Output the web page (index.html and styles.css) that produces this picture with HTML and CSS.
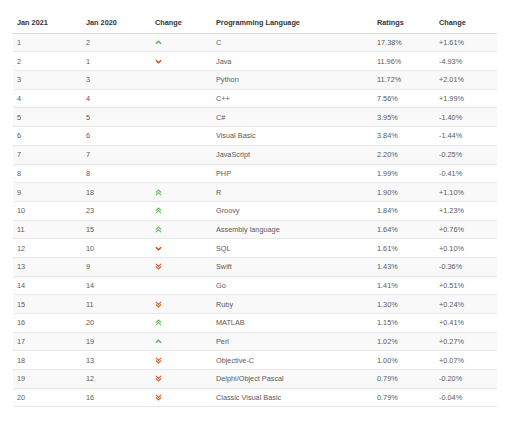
FILE: index.html
```html
<!DOCTYPE html>
<html>
<head>
<meta charset="utf-8">
<link rel="stylesheet" href="styles.css">
</head>
<body>
<svg width="0" height="0" class="defs">
  <defs>
    <symbol id="up" viewBox="0 0 8 8"><path d="M1 5.5 L4 2.5 L7 5.5" fill="none" stroke="#5cb85c" stroke-width="1.6"/></symbol>
    <symbol id="down" viewBox="0 0 8 8"><path d="M1 2.5 L4 5.5 L7 2.5" fill="none" stroke="#d9441c" stroke-width="1.6"/></symbol>
    <symbol id="up2" viewBox="0 0 8 8"><path d="M1 4 L4 1.2 L7 4 M1 7 L4 4.2 L7 7" fill="none" stroke="#6cc06c" stroke-width="1.4"/></symbol>
    <symbol id="down2" viewBox="0 0 8 8"><path d="M1 1 L4 3.8 L7 1 M1 4 L4 6.8 L7 4" fill="none" stroke="#e8622a" stroke-width="1.4"/></symbol>
  </defs>
</svg>
<table class="tiobe">
  <thead>
    <tr><th class="c1">Jan 2021</th><th class="c2">Jan 2020</th><th class="c3">Change</th><th class="c4">Programming Language</th><th class="c5">Ratings</th><th class="c6">Change</th></tr>
  </thead>
  <tbody>
    <tr><td>1</td><td>2</td><td><svg class="ic"><use href="#up"/></svg></td><td>C</td><td>17.38%</td><td>+1.61%</td></tr>
    <tr><td>2</td><td>1</td><td><svg class="ic"><use href="#down"/></svg></td><td>Java</td><td>11.96%</td><td>-4.93%</td></tr>
    <tr><td>3</td><td>3</td><td></td><td>Python</td><td>11.72%</td><td>+2.01%</td></tr>
    <tr><td>4</td><td>4</td><td></td><td>C++</td><td>7.56%</td><td>+1.99%</td></tr>
    <tr><td>5</td><td>5</td><td></td><td>C#</td><td>3.95%</td><td>-1.40%</td></tr>
    <tr><td>6</td><td>6</td><td></td><td>Visual Basic</td><td>3.84%</td><td>-1.44%</td></tr>
    <tr><td>7</td><td>7</td><td></td><td>JavaScript</td><td>2.20%</td><td>-0.25%</td></tr>
    <tr><td>8</td><td>8</td><td></td><td>PHP</td><td>1.99%</td><td>-0.41%</td></tr>
    <tr><td>9</td><td>18</td><td><svg class="ic"><use href="#up2"/></svg></td><td>R</td><td>1.90%</td><td>+1.10%</td></tr>
    <tr><td>10</td><td>23</td><td><svg class="ic"><use href="#up2"/></svg></td><td>Groovy</td><td>1.84%</td><td>+1.23%</td></tr>
    <tr><td>11</td><td>15</td><td><svg class="ic"><use href="#up2"/></svg></td><td>Assembly language</td><td>1.64%</td><td>+0.76%</td></tr>
    <tr><td>12</td><td>10</td><td><svg class="ic"><use href="#down"/></svg></td><td>SQL</td><td>1.61%</td><td>+0.10%</td></tr>
    <tr><td>13</td><td>9</td><td><svg class="ic"><use href="#down2"/></svg></td><td>Swift</td><td>1.43%</td><td>-0.36%</td></tr>
    <tr><td>14</td><td>14</td><td></td><td>Go</td><td>1.41%</td><td>+0.51%</td></tr>
    <tr><td>15</td><td>11</td><td><svg class="ic"><use href="#down2"/></svg></td><td>Ruby</td><td>1.30%</td><td>+0.24%</td></tr>
    <tr><td>16</td><td>20</td><td><svg class="ic"><use href="#up2"/></svg></td><td>MATLAB</td><td>1.15%</td><td>+0.41%</td></tr>
    <tr><td>17</td><td>19</td><td><svg class="ic"><use href="#up"/></svg></td><td>Perl</td><td>1.02%</td><td>+0.27%</td></tr>
    <tr><td>18</td><td>13</td><td><svg class="ic"><use href="#down2"/></svg></td><td>Objective-C</td><td>1.00%</td><td>+0.07%</td></tr>
    <tr><td>19</td><td>12</td><td><svg class="ic"><use href="#down2"/></svg></td><td>Delphi/Object Pascal</td><td>0.79%</td><td>-0.20%</td></tr>
    <tr><td>20</td><td>16</td><td><svg class="ic"><use href="#down2"/></svg></td><td>Classic Visual Basic</td><td>0.79%</td><td>-0.04%</td></tr>
  </tbody>
</table>
</body>
</html>
```
FILE: styles.css
```css
html, body {
  margin: 0;
  padding: 0;
  background: #ffffff;
}
body {
  padding: 13px 15px 0 13px;
  font-family: "Liberation Sans", Arial, sans-serif;
}
.defs {
  position: absolute;
  width: 0;
  height: 0;
}
.tiobe {
  border-collapse: collapse;
  width: 484px;
  table-layout: fixed;
  font-size: 7.3px;
  color: #5a5a5a;
}
.tiobe th {
  text-align: left;
  font-weight: bold;
  color: #333333;
  padding: 0 4px;
  height: 19.7px;
  line-height: 9px;
  border-bottom: 1px solid #dcdcdc;
}
.c1 { width: 61px; }
.c2 { width: 61px; }
.c3 { width: 53px; }
.c4 { width: 153px; }
.c5 { width: 54px; }
.c6 { width: 54px; }
.tiobe td {
  padding: 0 4px;
  height: 17.7px;
  line-height: 9px;
  border-bottom: 1px solid #e8e8e8;
  vertical-align: middle;
}
.tiobe tbody tr:nth-child(odd) {
  background: #f9f9f9;
}
.ic {
  display: block;
  width: 7px;
  height: 7px;
  margin-left: 0;
}
```
